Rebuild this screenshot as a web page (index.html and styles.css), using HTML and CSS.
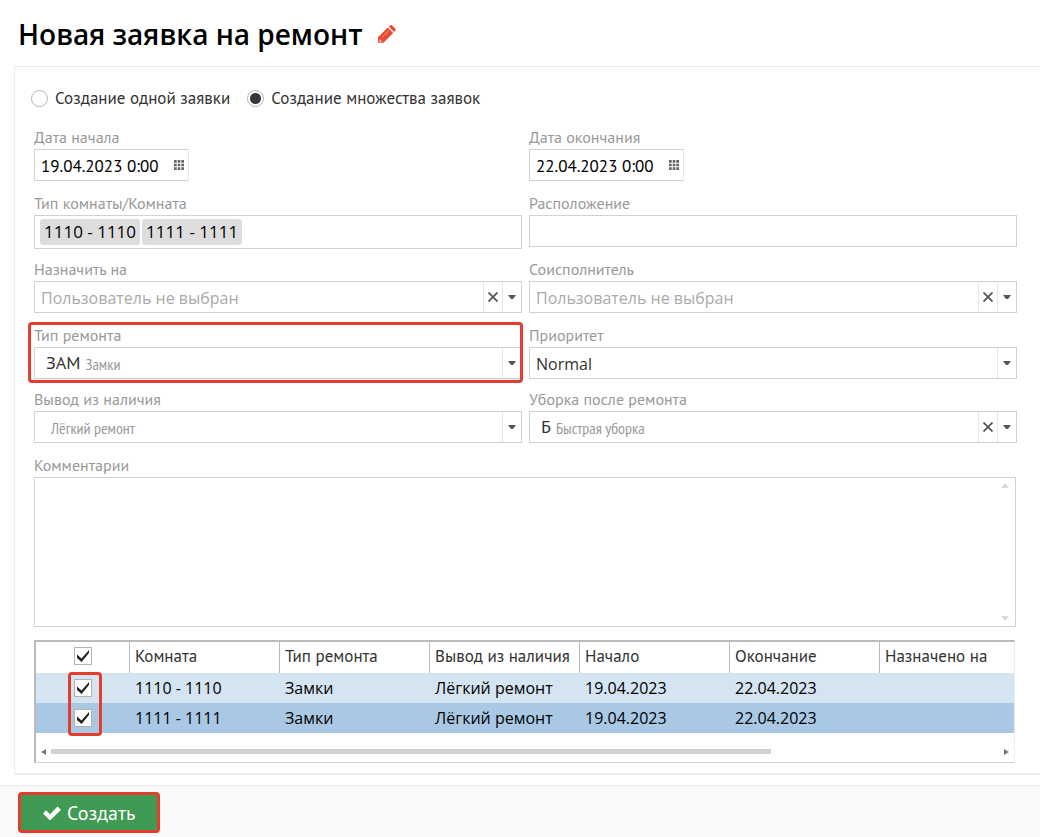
FILE: index.html
```
<!DOCTYPE html>
<html lang="ru">
<head>
<meta charset="utf-8">
<meta name="viewport" content="width=device-width, initial-scale=1">
<title>Новая заявка на ремонт</title>
<link rel="stylesheet" href="styles.css">
</head>
<body>
<svg class="sprite" aria-hidden="true">
  <symbol id="grid" viewBox="0 0 10 10"><path d="M0 0h2.700v2.700H0zM3.700 0h2.600v2.700H3.700zM7.300 0H10v2.700H7.300zM0 3.700h2.700v2.600H0zM3.700 3.700h2.600v2.600H3.700zM7.300 3.700H10v2.600H7.300zM0 7.300h2.700V10H0zM3.700 7.300h2.600V10H3.700zM7.300 7.300H10V10H7.300z"/></symbol>
  <symbol id="caret" viewBox="0 0 8 4"><path d="M0 0h8L5 4H3z"/></symbol>
  <symbol id="cross" viewBox="0 0 10 10"><path d="M.5.500l9 9M9.500.500l-9 9" fill="none" stroke="currentColor" stroke-width="1.8"/></symbol>
</svg>
<header class="page-head">
  <h1 class="page-title">Новая заявка на ремонт</h1>
  <button class="icon-btn" type="button" aria-label="Редактировать">
    <svg class="pencil" viewBox="0 0 18 18"><path d="M0 12.200 9.700 2.500l5.500 5.500L5.500 17.700H0z"/><path d="M10.700 1.600 12 .5q1-1 2.200 0l3 3q1 1 0 2.200L16.200 7z"/><path class="pencil-cut" d="M1.600 14l2.200 2.200-.9.500H1.500v-1.300zM4.300 11.700l6-6 .4.400-6 6z"/></svg>
  </button>
</header>
<form class="layout">
  <main class="panel">
    <div class="modes">
      <label class="mode"><input class="radio" type="radio" name="mode">Создание одной заявки</label>
      <label class="mode"><input class="radio" type="radio" name="mode" checked>Создание множества заявок</label>
    </div>
    <div class="row">
      <div class="field">
        <label class="caption" for="from">Дата начала</label>
        <div class="box box--date"><input class="input" id="from" type="text" value="19.04.2023 0:00"><button class="icon-btn icon-btn--date" type="button" aria-label="Календарь"><svg class="grid-icon"><use href="#grid"/></svg></button></div>
      </div>
      <div class="field">
        <label class="caption" for="to">Дата окончания</label>
        <div class="box box--date"><input class="input" id="to" type="text" value="22.04.2023 0:00"><button class="icon-btn icon-btn--date" type="button" aria-label="Календарь"><svg class="grid-icon"><use href="#grid"/></svg></button></div>
      </div>
    </div>
    <div class="row row--chips">
      <div class="field">
        <label class="caption" for="rooms">Тип комнаты/Комната</label>
        <div class="box box--chips"><span class="chip">1110 - 1110</span><span class="chip">1111 - 1111</span><input class="input" id="rooms" type="text"></div>
      </div>
      <div class="field">
        <label class="caption" for="place">Расположение</label>
        <div class="box"><input class="input" id="place" type="text"></div>
      </div>
    </div>
    <div class="row">
      <div class="field">
        <label class="caption" for="assignee">Назначить на</label>
        <div class="box"><select class="input input--empty" id="assignee"><option>Пользователь не выбран</option></select><button class="cell" type="button" aria-label="Очистить"><svg class="cross"><use href="#cross"/></svg></button><span class="cell"><svg class="caret"><use href="#caret"/></svg></span></div>
      </div>
      <div class="field">
        <label class="caption" for="helper">Соисполнитель</label>
        <div class="box"><select class="input input--empty" id="helper"><option>Пользователь не выбран</option></select><button class="cell" type="button" aria-label="Очистить"><svg class="cross"><use href="#cross"/></svg></button><span class="cell"><svg class="caret"><use href="#caret"/></svg></span></div>
      </div>
    </div>
    <div class="row row--tight">
      <div class="field field--marked">
        <label class="caption" for="kind">Тип ремонта</label>
        <div class="box"><span class="code">ЗАМ</span><select class="input input--note" id="kind"><option>Замки</option></select><span class="cell"><svg class="caret"><use href="#caret"/></svg></span></div>
      </div>
      <div class="field">
        <label class="caption" for="priority">Приоритет</label>
        <div class="box"><select class="input input--value" id="priority"><option>Normal</option></select><span class="cell"><svg class="caret"><use href="#caret"/></svg></span></div>
      </div>
    </div>
    <div class="row">
      <div class="field">
        <label class="caption" for="outage">Вывод из наличия</label>
        <div class="box"><span class="code"></span><select class="input input--note" id="outage"><option>Лёгкий ремонт</option></select><span class="cell"><svg class="caret"><use href="#caret"/></svg></span></div>
      </div>
      <div class="field">
        <label class="caption" for="cleaning">Уборка после ремонта</label>
        <div class="box"><span class="code">Б</span><select class="input input--note" id="cleaning"><option>Быстрая уборка</option></select><button class="cell" type="button" aria-label="Очистить"><svg class="cross"><use href="#cross"/></svg></button><span class="cell"><svg class="caret"><use href="#caret"/></svg></span></div>
      </div>
    </div>
    <div class="comments">
      <label class="caption" for="comments">Комментарии</label>
      <div class="comments-box">
        <textarea class="comments-text" id="comments"></textarea>
        <div class="rail"><svg class="caret caret--up"><use href="#caret"/></svg><svg class="caret"><use href="#caret"/></svg></div>
      </div>
    </div>
    <div class="orders">
      <div class="orders-view">
        <table class="table">
          <thead>
            <tr><th class="pick"><input class="check" type="checkbox" aria-label="Выбрать все" checked></th><th>Комната</th><th>Тип ремонта</th><th>Вывод из наличия</th><th>Начало</th><th>Окончание</th><th>Назначено на</th><th></th></tr>
          </thead>
          <tbody>
            <tr class="odd"><td class="pick pick--marked"><input class="check" type="checkbox" aria-label="1110 - 1110" checked></td><td>1110 - 1110</td><td>Замки</td><td>Лёгкий ремонт</td><td>19.04.2023</td><td>22.04.2023</td><td></td><td></td></tr>
            <tr class="even"><td class="pick"><input class="check" type="checkbox" aria-label="1111 - 1111" checked></td><td>1111 - 1111</td><td>Замки</td><td>Лёгкий ремонт</td><td>19.04.2023</td><td>22.04.2023</td><td></td><td></td></tr>
          </tbody>
        </table>
      </div>
      <div class="scroll"><svg class="tip" viewBox="0 0 5 6"><path d="M5 0v6L0 3z"/></svg><div class="track"><div class="thumb"></div></div><svg class="tip" viewBox="0 0 5 6"><path d="M0 0v6l5-3z"/></svg></div>
    </div>
  </main>
  <footer class="actions">
    <button class="create" type="button"><svg class="tick" viewBox="0 0 18 14"><path d="M3 4.300 7 8.300 14.500.500 18 3.800 7.500 14h-1L0 7.500z"/></svg>Создать</button>
  </footer>
</form>
</body>
</html>
```
FILE: styles.css
```
*, *::after { box-sizing: border-box; }
body {
  margin: 0;
  min-height: 100vh;
  display: flex;
  flex-direction: column;
  overflow-x: hidden;
  background: #fff;
  color: #333;
  font: 17px/20px "PT Sans", "Noto Sans", sans-serif;
}
.sprite { display: none; }
svg { display: block; fill: currentColor; }
button { padding: 0; border: 0; background: none; font: inherit; }

.page-head { display: flex; align-items: center; gap: 15px; height: 66px; padding: 2px 18px 0; }
.page-title { margin: 0; color: #000; font: 600 28px/36px "Segoe UI", "Open Sans", sans-serif; }
.pencil { width: 18px; height: 18px; color: #e94b35; }
.pencil-cut { fill: #fbd0c8; }

.layout { flex: 1; display: flex; flex-direction: column; }
.panel {
  margin: 0 0 10px 14px;
  padding: 19px 23px 10px 19px;
  border: 1px solid #ececec;
  border-width: 1px 0 2px 1px;
}
.modes { display: flex; gap: 17px; height: 43px; margin-left: -3px; }
.mode { display: flex; align-items: center; gap: 7px; height: 24px; }
.radio {
  appearance: none;
  width: 17px;
  height: 17px;
  margin: 0;
  border: 1px solid #b4b4b4;
  border-radius: 50%;
  background: #fff;
}
.radio:checked { background: radial-gradient(circle, #33373a 5px, #fff 6px); }

.row { display: flex; gap: 7px; margin-bottom: 14px; }
.row--tight, .row--chips { margin-bottom: 12px; }
.field { position: relative; flex: 1; min-width: 0; }
.field--marked::after {
  content: "";
  position: absolute;
  inset: -5px -1px -4px -6px;
  border: 3px solid #e53c30;
  border-radius: 4px;
  pointer-events: none;
}
.caption { display: block; height: 20px; color: #999; font-size: 16px; line-height: 16px; }
.box { display: flex; height: 32px; border: 1px solid #d2d2d2; background: #fff; }
.box--date { width: 155px; border-right-color: #e8e8e8; }
.box--chips { align-items: center; gap: 2px; height: 34px; padding-left: 5px; }
.chip {
  padding: 0 4px;
  border-radius: 3px;
  background: #ddd;
  color: #000;
  font: 17px/26px "Segoe UI", "Open Sans", sans-serif;
  white-space: nowrap;
}
.input {
  appearance: none;
  flex: 1;
  min-width: 0;
  width: 0;
  margin: 0;
  padding: 2px 0 0 6px;
  border: 0;
  outline: 0;
  background: none;
  color: #000;
  font: 17px/26px "PT Sans", "Noto Sans", sans-serif;
}
.input--empty { color: #aaa; font: 16px/26px "Segoe UI", "Open Sans", sans-serif; }
.input--value { color: #333; font: 16px/26px "Segoe UI", "Open Sans", sans-serif; }
.input--note { padding-left: 5px; color: #999; font: 16px/26px "PT Sans Narrow", "Liberation Sans Narrow", "Open Sans Condensed", sans-serif; }
.code { padding-left: 11px; color: #333; font-size: 18px; line-height: 30px; }
.icon-btn--date { width: 19px; color: #666; }
.grid-icon { width: 10px; height: 10px; margin: 0 auto; }
.cell {
  display: flex;
  align-items: center;
  justify-content: center;
  width: 19px;
  border-left: 1px solid #e6e6e6;
  color: #555;
}
.cross { width: 10px; height: 10px; }
.caret { width: 8px; height: 4px; }
.caret--up { transform: rotate(180deg); }

.comments { margin: 0 1px 13px 0; }
.comments-box { display: flex; height: 150px; border: 1px solid #d2d2d2; }
.comments-text { flex: 1; border: 0; outline: 0; resize: none; background: none; font: inherit; overflow: hidden; }
.rail { display: flex; flex-direction: column; justify-content: space-between; padding: 6px; color: #d8d8d8; }

.orders {
  margin-right: 2px;
  border: 1px solid #d2d2d2;
  border-top: 2px solid #bbb;
  border-left: 2px solid #bbb;
  border-right-color: #eee;
}
.orders-view { overflow: hidden; padding-bottom: 4px; }
.table { width: 1144px; border-spacing: 0; table-layout: fixed; }
.table th, .table td { width: 150px; padding: 0 5px; text-align: left; white-space: nowrap; }
.table th { height: 31px; padding-bottom: 4px; border-right: 1px solid #bbb; font-weight: 400; }
.table td { height: 30px; color: #000; font: 16px/20px "Segoe UI", "Open Sans", sans-serif; }
.table .pick { position: relative; width: 94px; }
.pick--marked::after {
  content: "";
  position: absolute;
  z-index: 1;
  left: 32px;
  top: -1px;
  width: 34px;
  height: 64px;
  border: 3px solid #e53c30;
  border-radius: 4px;
  pointer-events: none;
}
.odd { background: #d4e4f1; }
.even { background: #a9c8e4; }
.check {
  appearance: none;
  display: block;
  width: 18px;
  height: 18px;
  margin: 0 auto;
  border: 1px solid #b4b4b4;
  background: #fff;
}
.check:checked {
  background: #fff url("data:image/svg+xml,%3Csvg xmlns='http://www.w3.org/2000/svg' viewBox='0 0 16 16'%3E%3Cpath d='M2 6.500v3.500l4.500 4L14 5V2L6.500 10.500z' fill='%23222'/%3E%3C/svg%3E") center / 16px 16px no-repeat;
}
.scroll { display: flex; align-items: center; gap: 5px; height: 25px; padding: 4px 5px 0; color: #777; }
.tip { width: 5px; height: 6px; }
.track { flex: 1; }
.thumb { width: 76%; height: 5px; background: #d3d1d1; }

.actions { flex: 1; padding: 6px 18px 4px; border-top: 1px solid #ececec; background: #f9f9f9; }
.create {
  display: flex;
  align-items: center;
  gap: 6px;
  height: 41px;
  padding: 0 22px;
  border: 3px solid #e53c30;
  border-radius: 4px;
  background: #3f9b53;
  color: #fff;
  font: 20px/24px "PT Sans", "Noto Sans", sans-serif;
}
.tick { width: 18px; height: 14px; }
```
